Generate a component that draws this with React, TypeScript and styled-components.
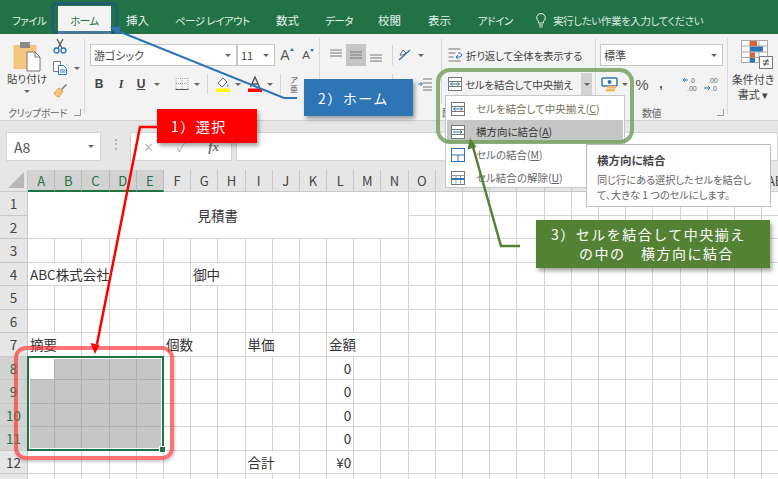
import React from "react";
import styled, { createGlobalStyle } from "styled-components";

const Global = createGlobalStyle`
  html, body { margin: 0; padding: 0; background: #fff; }
  * { box-sizing: border-box; }
`;

const Page = styled.div`
  position: relative;
  width: 778px;
  height: 479px;
  overflow: hidden;
  background: #fff;
  font-family: "Noto Sans CJK JP", "Noto Sans", sans-serif;
  font-feature-settings: "palt";
  color: #444;
`;

const TabBar = styled.div`
  display: flex;
  align-items: flex-end;
  height: 34px;
  background: #217346;
  padding-left: 12px;
`;
const Tab = styled.div<{ $w: number; $active?: boolean; $kana?: boolean }>`
  width: ${(p) => p.$w}px;
  height: 28px;
  display: flex;
  align-items: center;
  font-size: ${(p) => (p.$kana ? 10.5 : 11.5)}px;
  letter-spacing: ${(p) => (p.$kana ? -0.5 : 0)}px;
  white-space: nowrap;
  color: ${(p) => (p.$active ? "#217346" : "#e8f1ec")};
  background: ${(p) => (p.$active ? "#f3f3f3" : "transparent")};
  justify-content: ${(p) => (p.$active ? "center" : "flex-start")};
`;
const TellMe = styled.div`
  display: flex;
  align-items: center;
  gap: 6px;
  height: 28px;
  font-size: 10.5px;
  letter-spacing: -0.4px;
  color: #dbe8e0;
  white-space: nowrap;
`;

const Ribbon = styled.div`
  display: flex;
  height: 87px;
  background: #f3f3f3;
  border-bottom: 1px solid #d2d2d2;
`;
const Group = styled.div<{ $w: number; $last?: boolean }>`
  position: relative;
  width: ${(p) => p.$w}px;
  flex: none;
  display: flex;
  flex-direction: column;
  padding-top: 10px;
  &::after {
    content: "";
    display: ${(p) => (p.$last ? "none" : "block")};
    position: absolute;
    right: 0;
    top: 4px;
    bottom: 6px;
    width: 1px;
    background: #d8d8d8;
  }
`;
const Row = styled.div<{ $pl?: number; $mb?: number }>`
  display: flex;
  align-items: center;
  height: 22px;
  margin-bottom: ${(p) => p.$mb ?? 7}px;
  padding-left: ${(p) => p.$pl ?? 0}px;
`;
const Slot = styled.div<{ $w: number; $ml?: number; $on?: boolean }>`
  position: relative;
  width: ${(p) => p.$w}px;
  height: 22px;
  flex: none;
  margin-left: ${(p) => p.$ml ?? 0}px;
  display: flex;
  align-items: center;
  justify-content: center;
  font-size: 12px;
  color: #444;
  background: ${(p) => (p.$on ? "#c6c6c6" : "transparent")};
`;
const Bold = styled.span`
  font-family: "Liberation Sans", sans-serif;
  font-weight: 700;
  font-size: 12px;
`;
const Ital = styled(Bold)`
  font-family: "Liberation Serif", serif;
  font-style: italic;
`;
const Under = styled(Bold)`
  text-decoration: underline;
`;
const Percent = styled.span`
  font-family: "Liberation Sans", sans-serif;
  font-size: 15px;
  color: #555;
`;
const Caret = styled.span`
  flex: none;
  width: 0;
  height: 0;
  border-left: 3px solid transparent;
  border-right: 3px solid transparent;
  border-top: 3px solid #666;
`;
const CaretSlot = styled(Slot)``;
const Sep = styled.div<{ $ml?: number }>`
  flex: none;
  width: 1px;
  height: 20px;
  margin-left: ${(p) => p.$ml ?? 0}px;
  background: #d4d4d4;
`;
const Combo = styled.div<{ $w: number }>`
  width: ${(p) => p.$w}px;
  height: 22px;
  flex: none;
  display: flex;
  align-items: center;
  justify-content: space-between;
  padding: 0 5px 0 3px;
  background: #fff;
  border: 1px solid #c6c6c6;
  font-size: 11px;
  color: #444;
`;
const GrowA = styled.span`
  font-family: "Liberation Sans", sans-serif;
  font-size: 14px;
  color: #555;
`;
const ShrinkA = styled(GrowA)`
  font-size: 11.5px;
`;
const UpMark = styled.span`
  position: absolute;
  right: 1px;
  top: 4px;
  width: 0;
  height: 0;
  border-left: 2.5px solid transparent;
  border-right: 2.5px solid transparent;
  border-bottom: 3px solid #2e75b6;
`;
const DownMark = styled.span`
  position: absolute;
  right: 3px;
  top: 5px;
  width: 0;
  height: 0;
  border-left: 2.5px solid transparent;
  border-right: 2.5px solid transparent;
  border-top: 3px solid #2e75b6;
`;
const Foot = styled.div<{ $pl: number }>`
  position: absolute;
  left: ${(p) => p.$pl}px;
  right: 4px;
  bottom: 0;
  height: 15px;
  display: flex;
  align-items: center;
  justify-content: space-between;
  font-size: 10px;
  letter-spacing: -0.4px;
  color: #666;
  white-space: nowrap;
`;
const Launcher = styled.span`
  width: 7px;
  height: 7px;
  border-left: 1px solid #999;
  border-bottom: 1px solid #999;
  transform: rotate(-90deg);
`;

const ClipBody = styled.div`
  display: flex;
  padding-left: 4px;
  margin-top: -9px;
`;
const PasteCol = styled.div`
  width: 46px;
  display: flex;
  flex-direction: column;
  align-items: center;
  font-size: 10.5px;
  color: #444;
  line-height: 14px;
  padding-top: 7px;
`;
const PasteCaret = styled(Caret)`
  margin-top: 4px;
`;
const SmallCol = styled.div`
  display: flex;
  flex-direction: column;
  padding-left: 1px;
`;
const AlignSections = styled.div`
  display: flex;
`;
const AlignLeft = styled.div`
  width: 121px;
  flex: none;
`;
const AlignRight = styled.div`
  flex: 1;
  position: relative;
  padding-left: 6px;
  &::before {
    content: "";
    position: absolute;
    left: 0;
    top: -6px;
    height: 66px;
    width: 1px;
    background: #d8d8d8;
  }
`;
const WideButton = styled.div`
  display: flex;
  align-items: center;
  gap: 2px;
  height: 22px;
  font-size: 10.5px;
  letter-spacing: -0.2px;
  color: #444;
  white-space: nowrap;
`;
const MergeCaret = styled.div`
  width: 11px;
  height: 22px;
  flex: none;
  margin-left: auto;
  margin-right: 4px;
  background: #d2d2d2;
  display: flex;
  align-items: center;
  justify-content: center;
`;
const Stack = styled.div`
  display: flex;
  flex-direction: column;
  align-items: center;
  font-size: 11px;
  line-height: 14.5px;
  color: #444;
  white-space: nowrap;
  margin-top: -5px;
`;
const StackIcon = styled.div`
  margin-left: 8px;
  height: 32px;
`;
const StackText = styled.div`
  text-align: center;
  margin-top: 1px;
`;
const Ruby = styled.div`
  display: flex;
  flex-direction: column;
  align-items: center;
  font-size: 8px;
  line-height: 9px;
  color: #555;
`;

const FormulaBar = styled.div`
  display: flex;
  height: 49px;
  background: #e6e6e6;
  padding: 11px 0 9px 6px;
`;
const NameBox = styled.div`
  width: 95px;
  display: flex;
  align-items: center;
  justify-content: space-between;
  padding: 0 6px 0 7px;
  background: #fff;
  border: 1px solid #d4d4d4;
  font-size: 14px;
  color: #555;
`;
const Dots = styled.div`
  width: 29px;
  text-align: center;
  color: #999;
  font-size: 12px;
  line-height: 7px;
  padding-top: 7px;
`;
const FxBox = styled.div`
  width: 102px;
  display: flex;
  align-items: center;
  justify-content: space-between;
  padding: 0 12px;
  background: #fff;
  border: 1px solid #d4d4d4;
  color: #bbb;
  font-size: 13px;
`;
const Fx = styled.span`
  font-family: "Liberation Serif", serif;
  font-style: italic;
  font-weight: 700;
  font-size: 13px;
  color: #777;
`;
const FormulaInput = styled.div`
  flex: 1;
  margin-left: 4px;
  background: #fff;
  border: 1px solid #d4d4d4;
`;

const Sheet = styled.div`
  display: grid;
  grid-template-columns: 28px repeat(28, 27.2px);
  grid-template-rows: 22px repeat(13, 23.5px);
`;
const Corner = styled.div`
  background: #e6e6e6;
  border-right: 1px solid #c8c8c8;
  border-bottom: 1px solid #c8c8c8;
  display: flex;
  align-items: flex-end;
  justify-content: flex-end;
  padding: 0 3px 3px 0;
`;
const CornerMark = styled.span`
  width: 0;
  height: 0;
  border-left: 16px solid transparent;
  border-bottom: 16px solid #b8b8b8;
`;
const ColHead = styled.div<{ $sel?: boolean }>`
  background: ${(p) => (p.$sel ? "#d2d2d2" : "#e6e6e6")};
  color: ${(p) => (p.$sel ? "#217346" : "#444")};
  border-right: 1px solid ${(p) => (p.$sel ? "#b8b8b8" : "#c8c8c8")};
  border-bottom: ${(p) => (p.$sel ? "2px solid #217346" : "1px solid #c8c8c8")};
  display: flex;
  align-items: center;
  justify-content: center;
  font-size: 13px;
  white-space: nowrap;
`;
const RowHead = styled.div<{ $r: number; $sel?: boolean }>`
  grid-column: 1;
  grid-row: ${(p) => p.$r + 1};
  background: ${(p) => (p.$sel ? "#d2d2d2" : "#e6e6e6")};
  color: ${(p) => (p.$sel ? "#217346" : "#444")};
  border-right: 1px solid #c8c8c8;
  border-bottom: 1px solid #c8c8c8;
  display: flex;
  align-items: center;
  justify-content: center;
  font-size: 13.5px;
`;
const Cell = styled.div<{ $c: number; $r: number; $span?: number; $rows?: number; $right?: boolean; $center?: boolean; $sel?: boolean; $active?: boolean }>`
  grid-column: ${(p) => p.$c + 2} / span ${(p) => p.$span ?? 1};
  grid-row: ${(p) => p.$r + 1} / span ${(p) => p.$rows ?? 1};
  background: ${(p) => (p.$active ? "#fff" : p.$sel ? "#c6c6c6" : "#fff")};
  border-right: 1px solid ${(p) => (p.$sel ? "#b0b0b0" : "#d4d4d4")};
  border-bottom: 1px solid ${(p) => (p.$sel ? "#b0b0b0" : "#d4d4d4")};
  display: flex;
  align-items: center;
  justify-content: ${(p) => (p.$center ? "center" : p.$right ? "flex-end" : "flex-start")};
  padding: 0 2px;
  font-size: 13.5px;
  color: #333;
  white-space: nowrap;
`;
const Selection = styled.div`
  grid-column: 2 / span 5;
  grid-row: 9 / span 4;
  position: relative;
  margin: -1px 0 0 -1px;
  border: 2px solid #217346;
  box-shadow: inset 0 0 0 1px #fff;
  pointer-events: none;
`;
const Handle = styled.span`
  position: absolute;
  right: -4px;
  bottom: -4px;
  width: 7px;
  height: 7px;
  background: #217346;
  border: 1px solid #fff;
`;

const Menu = styled.div`
  position: absolute;
  left: 445px;
  top: 95px;
  width: 180px;
  height: 93px;
  padding: 1px;
  background: #fff;
  border: 1px solid #c6c6c6;
`;
const MenuItem = styled.div<{ $on?: boolean; $dim?: boolean }>`
  display: flex;
  align-items: center;
  height: 23px;
  padding-left: 3px;
  gap: 10px;
  font-size: 10.5px;
  white-space: nowrap;
  color: ${(p) => (p.$on ? "#333" : p.$dim ? "#7a7058" : "#666")};
  background: ${(p) => (p.$on ? "#c6c6c6" : "transparent")};
`;
const Tooltip = styled.div`
  position: absolute;
  left: 586px;
  top: 144px;
  width: 185px;
  height: 63px;
  padding: 5px 10px;
  background: #fff;
  border: 1px solid #bebebe;
`;
const TipTitle = styled.div`
  font-size: 11.5px;
  font-weight: 700;
  color: #444;
  line-height: 20px;
  margin-bottom: 2px;
`;
const TipBody = styled.div`
  font-size: 10.2px;
  line-height: 15px;
  color: #666;
`;

const Callout = styled.div`
  position: absolute;
  display: flex;
  color: #fff;
  font-size: 14px;
  letter-spacing: 1.5px;
  font-feature-settings: normal;
  box-shadow: 2px 3px 4px rgba(0, 0, 0, 0.35);
`;
const BlueCallout = styled(Callout)`
  left: 304px;
  top: 79px;
  width: 109px;
  height: 37px;
  background: #2e75b6;
  align-items: center;
  padding-left: 14px;
`;
const RedCallout = styled(Callout)`
  left: 157px;
  top: 109px;
  width: 100px;
  height: 34px;
  background: #ff0000;
  align-items: center;
  padding-left: 14px;
`;
const GreenCallout = styled(Callout)`
  left: 536px;
  top: 220px;
  width: 234px;
  height: 48px;
  background: #548235;
  flex-direction: column;
  justify-content: center;
  padding-left: 15px;
  line-height: 19px;
`;
const CalloutLine2 = styled.div`
  padding-left: 28px;
`;
const TabRing = styled.div`
  position: absolute;
  left: 51px;
  top: 2px;
  width: 67px;
  height: 32px;
  border: 3px solid rgba(31, 88, 125, 0.8);
  border-radius: 6px;
`;
const GreenRing = styled.div`
  position: absolute;
  left: 436px;
  top: 68px;
  width: 198px;
  height: 76px;
  border: 4px solid rgba(120, 160, 100, 0.85);
  border-radius: 14px;
`;
const RedRing = styled.div`
  position: absolute;
  left: 14px;
  top: 346px;
  width: 160px;
  height: 114px;
  border: 4px solid rgba(255, 50, 55, 0.68);
  border-radius: 12px;
  box-shadow: 1px 2px 3px rgba(0, 0, 0, 0.2);
`;
const ArrowLayer = styled.svg`
  position: absolute;
  left: 0;
  top: 0;
  pointer-events: none;
`;
const U = styled.span`
  text-decoration: underline;
`;

const Ic = ({ w = 16, h = 16, children }: { w?: number; h?: number; children: React.ReactNode }) => (
  <svg width={w} height={h} viewBox={`0 0 ${w} ${h}`} fill="none">
    {children}
  </svg>
);

const MergeIcon = () => (
  <Ic>
    <rect x="1.5" y="1.5" width="13" height="13" stroke="#777" fill="#fff" />
    <path d="M1.5 5.5h13M1.5 10.5h13" stroke="#777" />
    <path d="M3.5 8h9M3.5 8l2-1.6M3.5 8l2 1.600M12.500 8l-2-1.600M12.500 8l-2 1.600" stroke="#2e75b6" />
  </Ic>
);
const AcrossIcon = () => (
  <Ic>
    <rect x="1.5" y="1.5" width="13" height="13" stroke="#777" fill="#fff" />
    <path d="M1.5 5.5h13M1.5 10.5h13" stroke="#777" />
    <path d="M3 8h9M12 8l-2-1.600M12 8l-2 1.600" stroke="#2e75b6" />
  </Ic>
);
const SplitIcon = () => (
  <Ic>
    <rect x="1.5" y="1.5" width="13" height="13" stroke="#2e75b6" fill="#fff" />
    <path d="M1.5 8h13M8 8v6.500" stroke="#2e75b6" />
  </Ic>
);
const UnmergeIcon = () => (
  <Ic>
    <rect x="1.5" y="1.5" width="13" height="13" stroke="#777" fill="#fff" />
    <path d="M1.5 5.5h13M6 5.500v8M10.500 5.500v8" stroke="#999" />
    <path d="M1.500 9h13" stroke="#2e75b6" strokeWidth="2" />
  </Ic>
);
const Lines = ({ y }: { y: number }) => (
  <Ic w={14} h={16}>
    <path d={`M1 ${y}h12M1 ${y + 3}h12M1 ${y + 6}h12`} stroke="#777" />
  </Ic>
);

const columns = "A B C D E F G H I J K L M N O P Q R S T U V W X Y Z AA AB".split(" ");
const selCols = 5;

type Spec = { c: number; span?: number; text?: string; right?: boolean };
const content: Record<number, Spec[]> = {
  4: [{ c: 0, span: 4, text: "ABC株式会社" }, { c: 6, span: 2, text: "御中" }],
  7: [
    { c: 0, span: 2, text: "摘要" },
    { c: 5, span: 2, text: "個数" },
    { c: 8, span: 2, text: "単価" },
    { c: 11, span: 2, text: "金額" },
  ],
  8: [{ c: 11, text: "0", right: true }],
  9: [{ c: 11, text: "0", right: true }],
  10: [{ c: 11, text: "0", right: true }],
  11: [{ c: 11, text: "0", right: true }],
  12: [{ c: 8, span: 2, text: "合計" }, { c: 11, text: "¥0", right: true }],
};

const buildRow = (r: number) => {
  const out: React.ReactNode[] = [];
  const specs = content[r] ?? [];
  let c = r <= 2 ? 14 : 0;
  while (c < columns.length) {
    const s = specs.find((x) => x.c === c);
    const inSel = r >= 8 && r <= 11 && c < selCols;
    out.push(
      <Cell key={`${r}-${c}`} $c={c} $r={r} $span={s?.span} $right={s?.right} $sel={inSel} $active={r === 8 && c === 0}>
        {s?.text}
      </Cell>
    );
    c += s?.span ?? 1;
  }
  return out;
};

export default function App() {
  return (
    <Page>
      <Global />
      <TabBar>
        <Tab $w={46} $kana>ファイル</Tab>
        <Tab $w={53} $active $kana>ホーム</Tab>
        <Tab $w={15} />
        <Tab $w={49}>挿入</Tab>
        <Tab $w={101} $kana>ページ レイアウト</Tab>
        <Tab $w={49}>数式</Tab>
        <Tab $w={53} $kana>データ</Tab>
        <Tab $w={50}>校閲</Tab>
        <Tab $w={50}>表示</Tab>
        <Tab $w={57} $kana>アドイン</Tab>
        <TellMe>
          <Ic w={12} h={16}>
            <path d="M6 1.500a4.300 4.300 0 0 0-2.500 7.800V11h5V9.300A4.300 4.300 0 0 0 6 1.500zM4 13h4M4.500 15h3" stroke="#e8f1ec" />
          </Ic>
          実行したい作業を入力してください
        </TellMe>
      </TabBar>

      <Ribbon>
        <Group $w={85}>
          <ClipBody>
            <PasteCol>
              <svg width="30" height="30" viewBox="0 0 30 30" fill="none">
                <rect x="1.500" y="3" width="23" height="24" rx="1" fill="#f2c77d" />
                <rect x="8" y="0" width="10" height="6" fill="#8a8a8a" />
                <path d="M15 10h8l5 5v14H15z" fill="#fff" stroke="#777" />
                <path d="M23 10v5h5" stroke="#777" />
              </svg>
              <span>貼り付け</span>
              <PasteCaret />
            </PasteCol>
            <SmallCol>
              <Slot $w={18}>
                <Ic>
                  <path d="M5 1l5 9M11 1L6 10" stroke="#555" strokeWidth="1.300" />
                  <circle cx="4.500" cy="12.500" r="2.500" stroke="#2e75b6" strokeWidth="1.300" />
                  <circle cx="11.500" cy="12.500" r="2.500" stroke="#2e75b6" strokeWidth="1.300" />
                </Ic>
              </Slot>
              <Row $mb={0}>
                <Slot $w={18}>
                  <Ic>
                    <path d="M1.500 1.500h7v10h-7z" stroke="#777" fill="#fff" />
                    <path d="M6.500 5.500h5l3 3v6h-8z" stroke="#2e75b6" fill="#fff" />
                    <path d="M8 10h5M8 12h5" stroke="#2e75b6" />
                  </Ic>
                </Slot>
                <Slot $w={16}><Caret /></Slot>
              </Row>
              <Slot $w={18}>
                <Ic>
                  <path d="M9 7l5-5 1 1-5 5z" fill="#777" />
                  <path d="M2 11l5-5 4 3-4 6c-2 0-4-2-5-4z" fill="#f2c77d" stroke="#d9a44e" />
                </Ic>
              </Slot>
            </SmallCol>
          </ClipBody>
          <Foot $pl={8}>
            <span>クリップボード</span>
            <Launcher />
          </Foot>
        </Group>

        <Group $w={235}>
          <Row $pl={5}>
            <Combo $w={147}>
              <span>游ゴシック</span>
              <Caret />
            </Combo>
            <Combo $w={38}>
              <span>11</span>
              <Caret />
            </Combo>
            <Slot $w={20}><GrowA>A</GrowA><UpMark /></Slot>
            <Slot $w={22}><ShrinkA>A</ShrinkA><DownMark /></Slot>
          </Row>
          <Row $pl={5}>
            <Slot $w={18}><Bold>B</Bold></Slot>
            <Slot $w={18} $ml={4}><Ital>I</Ital></Slot>
            <Slot $w={22}><Under>U</Under></Slot>
            <CaretSlot $w={10}><Caret /></CaretSlot>
            <Slot $w={20} $ml={10}>
              <Ic>
                <path d="M2 2.500h12M2 7.500h12M2 2v11M8 2v11M14 2v11" stroke="#aaa" strokeDasharray="1 1" />
                <path d="M1.500 13.500h13" stroke="#555" />
              </Ic>
            </Slot>
            <CaretSlot $w={10}><Caret /></CaretSlot>
            <Sep $ml={5} />
            <Slot $w={20} $ml={5}>
              <Ic>
                <path d="M3 7l5-5 4 4-5 5z" fill="#fff" stroke="#666" />
                <path d="M12 8c1 1 2 2 1 3-1 0-1-2-1-3z" fill="#2e75b6" />
                <rect x="1" y="12.500" width="14" height="3.500" fill="#ffff00" />
              </Ic>
            </Slot>
            <CaretSlot $w={10}><Caret /></CaretSlot>
            <Slot $w={20} $ml={2}>
              <Ic>
                <path d="M3.500 11L8 1l4.500 10M5 8h6" stroke="#555" strokeWidth="1.400" />
                <rect x="1" y="12.500" width="14" height="3.500" fill="#ff0000" />
              </Ic>
            </Slot>
            <CaretSlot $w={9}><Caret /></CaretSlot>
            <Sep $ml={6} />
            <Slot $w={16} $ml={5}>
              <Ruby>
                <span>ア</span>
                <span>亜</span>
              </Ruby>
            </Slot>
          </Row>
        </Group>

        <Group $w={276}>
          <AlignSections>
            <AlignLeft>
              <Row $pl={6}>
                <Slot $w={20}><Lines y={3} /></Slot>
                <Slot $w={20} $on><Lines y={5} /></Slot>
                <Slot $w={20}><Lines y={8} /></Slot>
                <Sep $ml={6} />
                <Slot $w={24}>
                  <Ic>
                    <path d="M2 13L13 3" stroke="#2e75b6" strokeWidth="1.400" />
                    <path d="M3 8l3-5 3 3-3 2z" fill="#fff" stroke="#666" />
                  </Ic>
                </Slot>
                <CaretSlot $w={8}><Caret /></CaretSlot>
              </Row>
              <Row $pl={6}>
                <Slot $w={20}><Lines y={4} /></Slot>
                <Slot $w={20}><Lines y={4} /></Slot>
                <Slot $w={20}><Lines y={4} /></Slot>
                <Sep $ml={6} />
                <Slot $w={16} $ml={3}><Lines y={4} /></Slot>
                <Slot $w={18} $ml={4}>
                  <Ic>
                    <path d="M6 3h9M6 7h9M6 11h9M6 14h9" stroke="#777" />
                    <path d="M1 8h4M3.500 6l2 2-2 2" stroke="#2e75b6" />
                  </Ic>
                </Slot>
              </Row>
            </AlignLeft>
            <AlignRight>
              <Row>
                <WideButton>
                  <Ic w={17}>
                    <path d="M1.500 2h12M1.500 6h7M1.500 10h5M1.500 14h12" stroke="#777" />
                    <path d="M9 10h4c2 0 2-4 0-4h-2M9 10l2-2M9 10l2 2" stroke="#2e75b6" />
                  </Ic>
                  折り返して全体を表示する
                </WideButton>
              </Row>
              <Row>
                <WideButton>
                  <MergeIcon />
                  セルを結合して中央揃え
                </WideButton>
                <MergeCaret><Caret /></MergeCaret>
              </Row>
            </AlignRight>
          </AlignSections>
          <Foot $pl={122}>
            <span>配置</span>
          </Foot>
        </Group>

        <Group $w={132}>
          <Row $pl={4}>
            <Combo $w={123}>
              <span>標準</span>
              <Caret />
            </Combo>
          </Row>
          <Row $pl={4}>
            <Slot $w={20}>
              <Ic w={18}>
                <rect x="1" y="2" width="15" height="8" rx="1" fill="#fff" stroke="#2e75b6" strokeWidth="1.500" />
                <circle cx="8.500" cy="6" r="2" fill="#2e75b6" />
                <rect x="6" y="10" width="9" height="2.500" fill="#f2b866" />
                <rect x="5" y="13" width="9" height="2.500" fill="#f2b866" />
              </Ic>
            </Slot>
            <CaretSlot $w={10}><Caret /></CaretSlot>
            <Slot $w={24}><Percent>%</Percent></Slot>
            <Slot $w={14}><Bold>,</Bold></Slot>
            <Slot $w={20} $ml={13}>
              <Ic w={18}>
                <path d="M1 4h5M1 4l2-2M1 4l2 2" stroke="#2e75b6" />
                <text x="7" y="7" fontSize="7" fill="#666" fontFamily="Liberation Sans">.0</text>
                <text x="5" y="15" fontSize="7" fill="#666" fontFamily="Liberation Sans">.00</text>
              </Ic>
            </Slot>
            <Slot $w={20} $ml={1}>
              <Ic w={18}>
                <text x="5" y="7" fontSize="7" fill="#666" fontFamily="Liberation Sans">.00</text>
                <text x="8" y="15" fontSize="7" fill="#666" fontFamily="Liberation Sans">.0</text>
                <path d="M1 12h6M7 12l-2-2M7 12l-2 2" stroke="#2e75b6" />
              </Ic>
            </Slot>
          </Row>
          <Foot $pl={46}>
            <span>数値</span>
            <Launcher />
          </Foot>
        </Group>

        <Group $w={50} $last>
          <Stack>
            <StackIcon>
              <svg width="34" height="31" viewBox="0 0 34 31" fill="none">
                <rect x="1.500" y="1.500" width="26" height="22" fill="#fff" stroke="#aaa" />
                <path d="M10 1.500v22M19 1.500v22M1.500 7h26M1.500 13h26M1.500 18.500h26" stroke="#aaa" />
                <rect x="10" y="2" width="7" height="5" fill="#e0603a" />
                <rect x="10" y="7.500" width="13" height="5" fill="#2e75b6" />
                <rect x="10" y="13.500" width="5" height="5" fill="#e0603a" />
                <rect x="10" y="19" width="5" height="4.500" fill="#2e75b6" />
                <rect x="19.500" y="17.500" width="13" height="12" fill="#fff" stroke="#777" />
                <path d="M23 22h6M23 25h6M28 20l-4 7" stroke="#444" />
              </svg>
            </StackIcon>
            <StackText>
              条件付き
              <br />
              書式 ▾
            </StackText>
          </Stack>
        </Group>
      </Ribbon>

      <FormulaBar>
        <NameBox>
          A8
          <Caret />
        </NameBox>
        <Dots>⋮</Dots>
        <FxBox>
          <span>✕</span>
          <span>✓</span>
          <Fx>fx</Fx>
        </FxBox>
        <FormulaInput />
      </FormulaBar>

      <Sheet>
        <Corner><CornerMark /></Corner>
        {columns.map((c, i) => (
          <ColHead key={c} $sel={i < selCols}>{c}</ColHead>
        ))}
        {Array.from({ length: 13 }, (_, i) => i + 1).flatMap((r) => [
          <RowHead key={`h${r}`} $r={r} $sel={r >= 8 && r <= 11}>{r <= 12 ? r : ""}</RowHead>,
          r === 1 ? (
            <Cell key="title" $c={0} $r={1} $span={14} $rows={2} $center>
              見積書
            </Cell>
          ) : null,
          ...buildRow(r),
        ])}
        <Selection>
          <Handle />
        </Selection>
      </Sheet>

      <Menu>
        <MenuItem $dim>
          <MergeIcon />
          <span>セルを結合して中央揃え(<U>C</U>)</span>
        </MenuItem>
        <MenuItem $on>
          <AcrossIcon />
          <span>横方向に結合(<U>A</U>)</span>
        </MenuItem>
        <MenuItem>
          <SplitIcon />
          <span>セルの結合(<U>M</U>)</span>
        </MenuItem>
        <MenuItem>
          <UnmergeIcon />
          <span>セル結合の解除(<U>U</U>)</span>
        </MenuItem>
      </Menu>

      <Tooltip>
        <TipTitle>横方向に結合</TipTitle>
        <TipBody>
          同じ行にある選択したセルを結合し
          <br />
          て、大きな 1 つのセルにします。
        </TipBody>
      </Tooltip>

      <TabRing />
      <GreenRing />
      <RedRing />

      <ArrowLayer width="778" height="479" viewBox="0 0 778 479" fill="none">
        <path d="M297 98H284L118 31" stroke="#2e75b6" strokeWidth="2" />
        <path d="M110 27l11-.5-3.500 8z" fill="#2e75b6" />
        <path d="M157 127H140L97 344" stroke="#ff0000" strokeWidth="2.500" />
        <path d="M95 354l-4.500-11 9 1.800z" fill="#ff0000" />
        <path d="M520 246H501L473 147" stroke="#548235" strokeWidth="2.500" />
        <path d="M470 138l6.500 9-9 2.500z" fill="#548235" />
      </ArrowLayer>

      <BlueCallout>2）ホーム</BlueCallout>
      <RedCallout>1）選択</RedCallout>
      <GreenCallout>
        <div>3）セルを結合して中央揃え</div>
        <CalloutLine2>の中の　横方向に結合</CalloutLine2>
      </GreenCallout>
    </Page>
  );
}
